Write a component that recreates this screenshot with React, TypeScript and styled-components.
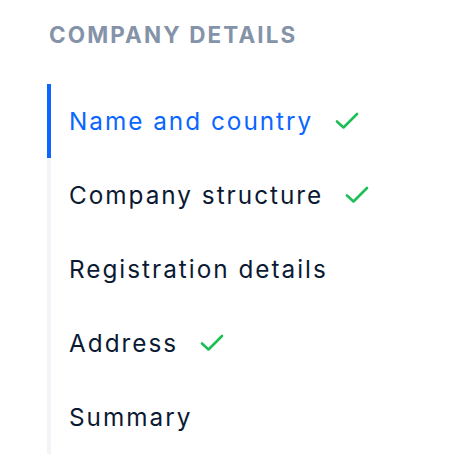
import React from "react";
import styled, { createGlobalStyle } from "styled-components";

const Global = createGlobalStyle`
  html, body { margin: 0; padding: 0; background: #ffffff; }
  body { font-family: Inter, "Noto Sans", sans-serif; }
`;

const Page = styled.div`
  padding: 22px 0 0 49px;
  width: 470px;
  height: 464px;
  box-sizing: border-box;
`;

const Title = styled.h2`
  margin: 0;
  font-family: Inter, "Liberation Sans", sans-serif;
  font-size: 22.5px;
  font-weight: 700;
  letter-spacing: 2.1px;
  color: #8493a8;
  line-height: 26px;
`;

const Nav = styled.ul`
  list-style: none;
  margin: 36px 0 0 -2px;
  padding: 0;
  border-left: 4px solid #f3f4f8;
  display: flex;
  flex-direction: column;
`;

const Item = styled.li<{ $active?: boolean }>`
  height: 74px;
  display: flex;
  align-items: center;
  gap: 22px;
  padding-left: 18px;
  margin-left: -4px;
  border-left: 4px solid ${(p) => (p.$active ? "#0a66ff" : "transparent")};
  font-size: 24.3px;
  letter-spacing: 2px;
  color: ${(p) => (p.$active ? "#0a66ff" : "#0b1a33")};
`;

const Check = styled.svg`
  width: 24px;
  height: 18px;
  flex: none;
`;

const CheckIcon = () => (
  <Check viewBox="0 0 24 18">
    <path d="M2 9.5 L8.5 15.5 L22 2" fill="none" stroke="#1cbf55" strokeWidth="2.6" strokeLinecap="round" strokeLinejoin="round" />
  </Check>
);

const items = [
  { label: "Name and country", done: true, active: true },
  { label: "Company structure", done: true },
  { label: "Registration details", done: false },
  { label: "Address", done: true },
  { label: "Summary", done: false },
];

export default function App() {
  return (
    <Page>
      <Global />
      <Title>COMPANY DETAILS</Title>
      <Nav>
        {items.map((it) => (
          <Item key={it.label} $active={it.active}>
            <span>{it.label}</span>
            {it.done && <CheckIcon />}
          </Item>
        ))}
      </Nav>
    </Page>
  );
}
